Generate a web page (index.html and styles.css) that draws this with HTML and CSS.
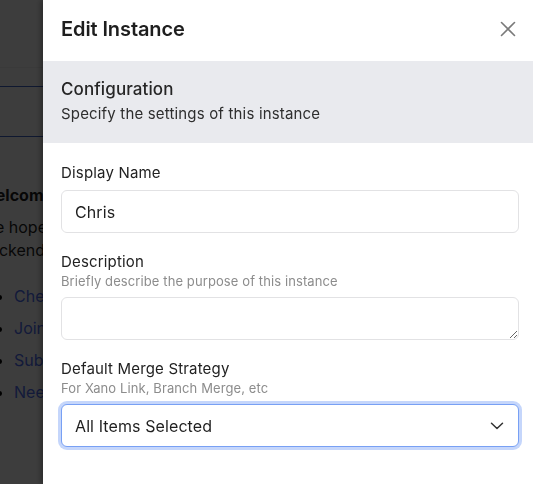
FILE: index.html
```html
<!DOCTYPE html>
<html lang="en">
    <head>
        <meta name="viewport" content="width=device-width, initial-scale=1.0">
        <title>Edit Instance</title>
        <link rel="stylesheet" href="styles.css">
    </head>
    <body>
        <div class="page">
            <div class="topbar"></div>
            <div class="tabs"></div>
            <div class="content">
                <p class="welcome">Welcome</p>
                <p>We hope you enjoy your<br>backend.</p>
                <ul>
                    <li><a href="#">Check the docs</a></li>
                    <li><a href="#">Join the community</a></li>
                    <li><a href="#">Subscribe</a></li>
                    <li><a href="#">Need help?</a></li>
                </ul>
            </div>
        </div>

        <div class="overlay"></div>

        <aside class="drawer">
            <div class="drawer-header">
                <h2>Edit Instance</h2>
                <button type="button" class="close" aria-label="Close">
                    <svg width="16" height="16" viewBox="0 0 16 16" fill="none" stroke="#7a7a7a" stroke-width="1.6" stroke-linecap="round">
                        <path d="M1.5 1.5 L14.5 14.5 M14.5 1.5 L1.5 14.5"/>
                    </svg>
                </button>
            </div>

            <div class="section">
                <h3>Configuration</h3>
                <p>Specify the settings of this instance</p>
            </div>

            <form class="form">
                <div class="field">
                    <label for="display_name">Display Name</label>
                    <input id="display_name" type="text" value="Chris">
                </div>

                <div class="field">
                    <label for="description">Description</label>
                    <div class="hint">Briefly describe the purpose of this instance</div>
                    <textarea id="description"></textarea>
                </div>

                <div class="field">
                    <label for="merge">Default Merge Strategy</label>
                    <div class="hint">For Xano Link, Branch Merge, etc</div>
                    <div class="select-wrap">
                        <select id="merge" class="focused">
                            <option>All Items Selected</option>
                        </select>
                        <svg class="chevron" width="14" height="8" viewBox="0 0 14 8" fill="none" stroke="#333" stroke-width="1.5" stroke-linecap="round" stroke-linejoin="round">
                            <path d="M1.5 1.2 L7 6.5 L12.5 1.2"/>
                        </svg>
                    </div>
                </div>
            </form>
        </aside>
    </body>
</html>
```

FILE: styles.css
```css
* {
    box-sizing: border-box;
}

body {
    margin: 0;
    font-family: Inter, "Liberation Sans", sans-serif;
    background: #fff;
    color: #1f1f1f;
    height: 484px;
    overflow: hidden;
}

/* page behind the drawer */
.page {
    margin-left: -20px;
}

.topbar {
    height: 68px;
    border-bottom: 1px solid #f0f0f0;
}

.tabs {
    margin-top: 18px;
    height: 51px;
    border-top: 1px solid #3f64c8;
    border-bottom: 1px solid #3f64c8;
}

.content {
    padding-top: 47px;
    font-size: 16px;
}

.content p {
    margin: 0 0 9px 0;
    line-height: 23px;
}

.welcome {
    font-weight: 700;
    margin-bottom: 9px;
}

.content ul {
    margin: 18px 0 0 0;
    padding-left: 34px;
}

.content li {
    line-height: 32px;
    color: #000;
}

.content a {
    color: #4f6ef0;
    text-decoration: none;
}

.overlay {
    position: fixed;
    inset: 0;
    background: rgba(0, 0, 0, 0.76);
}

/* drawer */
.drawer {
    position: fixed;
    top: 0;
    right: 0;
    bottom: 0;
    width: 490px;
    background: #fff;
    box-shadow: -2px 0 6px rgba(0, 0, 0, 0.35);
}

.drawer-header {
    height: 61px;
    display: flex;
    align-items: center;
    justify-content: space-between;
    padding: 0 17px 4px 18px;
}

.drawer-header h2 {
    margin: 0;
    font-size: 20px;
    font-weight: 600;
    color: #1e1e1e;
    letter-spacing: -0.1px;
}

.close {
    border: none;
    background: none;
    padding: 0;
    display: flex;
    cursor: pointer;
}

.section {
    background: #e9eaee;
    padding: 16px 18px 18px 18px;
}

.section h3 {
    margin: 0;
    font-size: 17px;
    font-weight: 500;
    line-height: 24px;
    color: #262626;
    letter-spacing: 0.1px;
}

.section p {
    margin: 2px 0 0 0;
    font-size: 15px;
    line-height: 22px;
    color: #2e2e2e;
    letter-spacing: 0.17px;
}

.form {
    padding: 20px 14px 0 18px;
    display: flex;
    flex-direction: column;
    gap: 19px;
}

.field {
    display: flex;
    flex-direction: column;
}

.field label {
    font-size: 15px;
    line-height: 20px;
    color: #222;
    margin-bottom: 7px;
    letter-spacing: 0.17px;
}

.hint {
    font-size: 13px;
    line-height: 18px;
    color: #8c8c8c;
    margin: -7px 0 7px 0;
    letter-spacing: 0.1px;
}

input[type="text"], textarea, select {
    font-family: inherit;
    font-size: 16px;
    color: #1f1f1f;
    width: 100%;
    height: 43px;
    border: 1px solid #e2e2e4;
    border-radius: 6px;
    background: #fff;
    padding: 0 14px;
    outline: none;
    letter-spacing: 0.1px;
}

input[type="text"] {
    padding-left: 13px;
}

textarea {
    resize: vertical;
    padding: 10px 14px;
    display: block;
}

.select-wrap {
    position: relative;
}

select {
    appearance: none;
    -webkit-appearance: none;
    display: block;
    padding-left: 13px;
}

select.focused {
    border-color: #78a0f4;
    box-shadow: 0 0 0 3px #c5d6fb;
}

.chevron {
    position: absolute;
    right: 15px;
    top: 18px;
    pointer-events: none;
}
```
